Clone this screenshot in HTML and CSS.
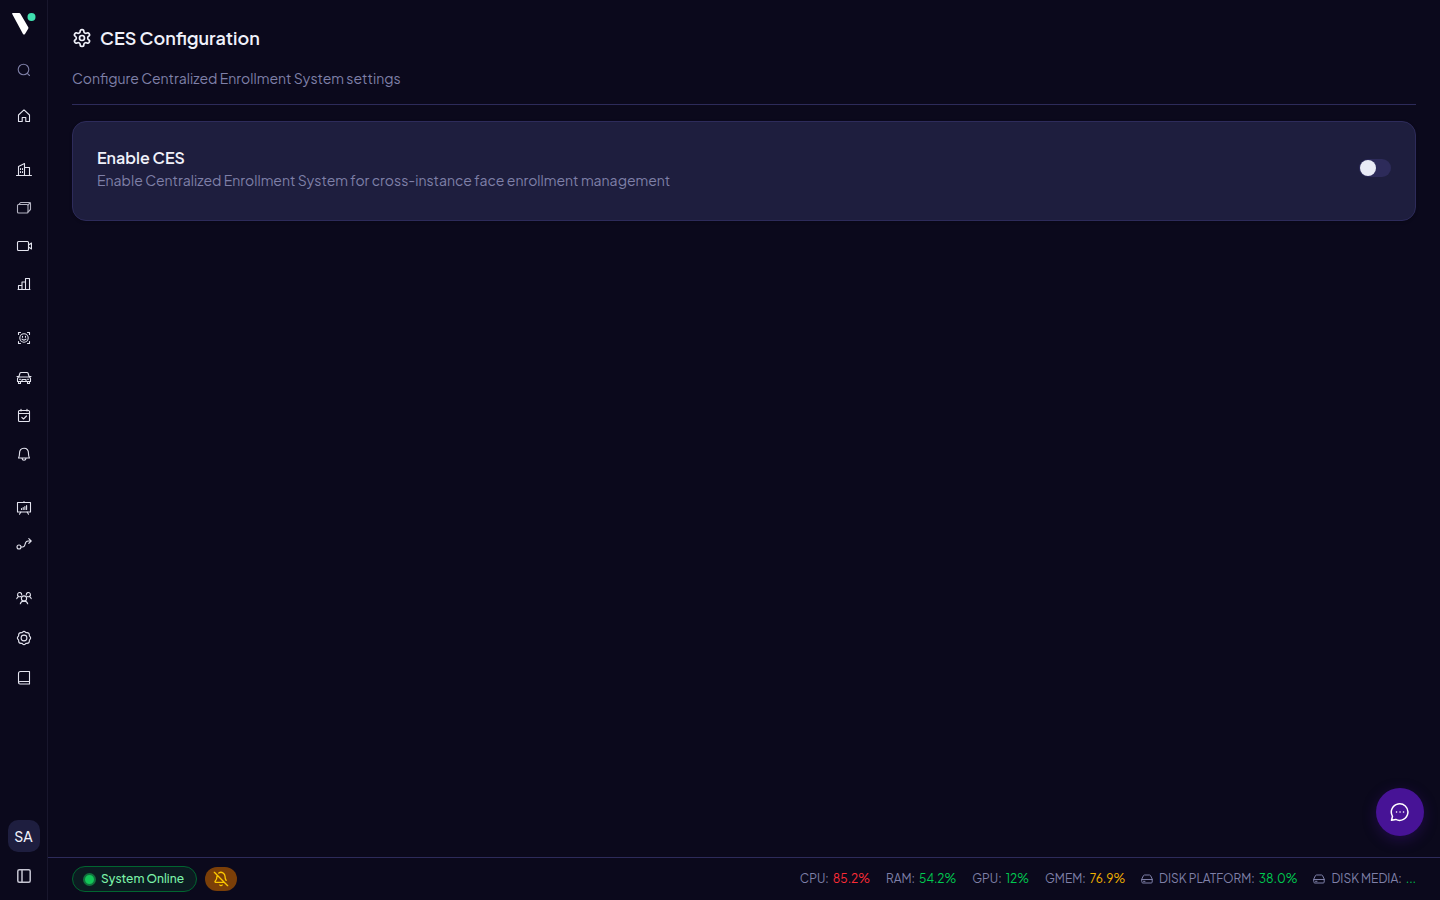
FILE: index.html
```html
<!DOCTYPE html>
<html lang="en">
<head>
  <meta charset="UTF-8" />
  <meta name="viewport" content="width=device-width, initial-scale=1.0"/>
  <title>CES Configuration</title>
  <link rel="stylesheet" href="styles.css">
</head>
<body>
  <aside class="sidebar">
    <a class="logo" href="#" aria-label="Home page">
      <svg width="24" height="24" viewBox="0 0 24 24">
        <path d="M.6 1H7.200Q8 1 8.400 1.700L16.300 15.300Q16.600 16 16.200 16.700L13 22Q12 23.200 11 22L.2 2Q0 1.200 .6 1Z" fill="#fff"/>
        <circle cx="19.500" cy="5" r="4" fill="#3fe0b0"/>
      </svg>
    </a>
    <button class="nav-item search" aria-label="Search">
      <svg class="icon" viewBox="0 0 16 16"><circle cx="7.500" cy="7.500" r="5.300"/><path d="M11.300 11.300L13.500 13.500"/></svg>
    </button>

    <nav class="nav">
      <div class="nav-group">
        <a class="nav-item" href="#" aria-label="Dashboard">
          <svg class="icon" viewBox="0 0 16 16"><path d="M2.500 7L8 1.800L13.500 7V13.500H9.800V9.500H6.200V13.500H2.500Z"/></svg>
        </a>
      </div>
      <div class="nav-group">
        <a class="nav-item tall" href="#" aria-label="Sites">
          <svg class="icon" viewBox="0 0 16 16"><path d="M.5 13.500H15.500M2.500 13.500V4.500L8.500 1.500V13.500M8.500 5.500H13.500V13.500"/><path d="M4.500 6.500V11M6.500 6.500V11" stroke-dasharray="1 2"/></svg>
        </a>
        <a class="nav-item" href="#" aria-label="Zones">
          <svg class="icon soft" viewBox="0 0 16 16"><rect x="1.500" y="4.500" width="10.500" height="8.500" rx="1"/><path d="M3 4.500L4 3Q4.300 2.500 5 2.500H13.500Q14.500 2.500 14.500 3.500V9.500L12 12M12 5L14.300 2.700"/></svg>
        </a>
        <a class="nav-item tall" href="#" aria-label="Cameras">
          <svg class="icon" viewBox="0 0 16 16"><rect x="1.500" y="3.500" width="11" height="9" rx="1"/><path d="M12.500 7L15.500 5V11L12.500 9"/></svg>
        </a>
        <a class="nav-item" href="#" aria-label="Analytics">
          <svg class="icon" viewBox="0 0 16 16"><path d="M2 13.500H14M2.500 13.500V9.500H6V13.500M6 10V6H9.500V13.500M9.500 6.500V2.500H13.500V13.500"/></svg>
        </a>
      </div>
      <div class="nav-group">
        <a class="nav-item tall" href="#" aria-label="Faces">
          <svg class="icon" viewBox="0 0 16 16"><path d="M2.500 4.500V2.500H4.500M11.500 2.500H13.500V4.500M13.500 11.500V13.500H11.500M4.500 13.500H2.500V11.500"/><circle cx="8" cy="8" r="4.200"/><path d="M6.500 6.300V7.300M9.500 6.300V7.300M6 9.200Q8 11 10 9.200"/></svg>
        </a>
        <a class="nav-item tall" href="#" aria-label="Vehicles">
          <svg class="icon" viewBox="0 0 16 16"><path d="M2.800 7L4 3Q4.300 2.500 5 2.500H11Q11.700 2.500 12 3L13.200 7M1 6.500H2.500M13.500 6.500H15M1.500 11.500V9Q1.500 7 3.500 7H12.500Q14.500 7 14.500 9V11.500ZM2.500 11.500V13.500H4.500V11.500M11.500 11.500V13.500H13.500V11.500M3.500 9.200H4.500M11.500 9.200H12.500M6 11.300V9.500H10V11.300"/></svg>
        </a>
        <a class="nav-item" href="#" aria-label="Attendance">
          <svg class="icon" viewBox="0 0 16 16"><rect x="2.500" y="2.500" width="11" height="11" rx="1"/><path d="M2.500 5.500H13.500M5 1.300V3M11 1.300V3M5.800 9.300L7.500 11L10.500 8"/></svg>
        </a>
        <a class="nav-item tall" href="#" aria-label="Alerts">
          <svg class="icon" viewBox="0 0 16 16"><path d="M2.500 12Q3.500 10.500 3.500 7.500Q3.500 2.200 8 2.200Q12.500 2.200 12.500 7.500Q12.500 10.500 13.500 12ZM6 12.300Q6.300 14.200 8 14.200Q9.700 14.200 10 12.300"/></svg>
        </a>
      </div>
      <div class="nav-group">
        <a class="nav-item" href="#" aria-label="Reports">
          <svg class="icon" viewBox="0 0 16 16"><rect x="1.500" y="2.500" width="13" height="9.500"/><path d="M8 1.500V2.500M4.800 12L3.500 14.200M11.200 12L12.500 14.200M5.500 9.500V8.500M7.200 9.500V7.500M8.900 9.500V6.500M10.600 9.500V5.500"/></svg>
        </a>
        <a class="nav-item" href="#" aria-label="Workflows">
          <svg class="icon" viewBox="0 0 16 16"><circle cx="3" cy="11" r="2"/><path d="M5 11H6.500Q8.500 11 9 8.500Q9.700 5 12 5H15M12.800 2.700L15.200 5L12.800 7.300"/></svg>
        </a>
      </div>
      <div class="nav-group">
        <a class="nav-item tall" href="#" aria-label="Users">
          <svg class="icon" viewBox="0 0 16 16"><circle cx="8" cy="8.500" r="2.600"/><path d="M4.300 13.800Q5 11.100 8 11.100Q11 11.100 11.700 13.800M5.700 5A2.100 2.100 0 1 0 2.600 6.500Q1.200 7 .8 8.700M2.600 6.500Q3.800 7 5 6.600M10.300 5A2.100 2.100 0 1 1 13.400 6.500Q14.800 7 15.200 8.700M13.400 6.500Q12.200 7 11 6.600"/></svg>
        </a>
        <a class="nav-item tall" href="#" aria-label="Settings">
          <svg class="icon" viewBox="0 0 16 16"><circle cx="8" cy="8" r="2.900"/><path d="M6.500 2.200Q8 .5 9.500 2.200L10.200 2.700L11 2.600Q13.300 2.700 13.400 5L13.300 5.800L13.800 6.500Q15.500 8 13.800 9.500L13.300 10.200L13.400 11Q13.300 13.300 11 13.400L10.200 13.300L9.500 13.800Q8 15.500 6.500 13.800L5.800 13.300L5 13.400Q2.700 13.300 2.600 11L2.700 10.200L2.200 9.500Q.5 8 2.200 6.500L2.700 5.800L2.600 5Q2.700 2.700 5 2.600L5.800 2.700Z"/></svg>
        </a>
        <a class="nav-item tall" href="#" aria-label="Documentation">
          <svg class="icon" viewBox="0 0 16 16"><path d="M2.500 12.500V3.500Q2.500 1.500 4.500 1.500H13.500V14H4Q2.500 14 2.500 12.500Q2.500 11.500 4 11.500H13.500"/></svg>
        </a>
      </div>
    </nav>

    <button class="avatar">SA</button>
    <button class="nav-item" aria-label="Expand sidebar">
      <svg class="icon panel" viewBox="0 0 16 16"><rect x="1.800" y="1.800" width="12.400" height="12.400" rx="1.500"/><path d="M6 2V14"/></svg>
    </button>
  </aside>

  <div class="page">
    <main class="content">
      <header class="page-header">
        <h1>
          <svg width="20" height="20" viewBox="0 0 24 24"><path d="M12.220 2h-.440a2 2 0 0 0-2 2v.180a2 2 0 0 1-1 1.730l-.430.250a2 2 0 0 1-2 0l-.150-.080a2 2 0 0 0-2.730.730l-.220.380a2 2 0 0 0 .730 2.730l.150.100a2 2 0 0 1 1 1.720v.510a2 2 0 0 1-1 1.740l-.150.090a2 2 0 0 0-.730 2.730l.220.380a2 2 0 0 0 2.730.730l.150-.080a2 2 0 0 1 2 0l.430.250a2 2 0 0 1 1 1.730V20a2 2 0 0 0 2 2h.440a2 2 0 0 0 2-2v-.180a2 2 0 0 1 1-1.730l.430-.250a2 2 0 0 1 2 0l.150.080a2 2 0 0 0 2.730-.730l.220-.390a2 2 0 0 0-.730-2.730l-.150-.080a2 2 0 0 1-1-1.740v-.500a2 2 0 0 1 1-1.740l.150-.090a2 2 0 0 0 .730-2.730l-.220-.380a2 2 0 0 0-2.730-.730l-.150.080a2 2 0 0 1-2 0l-.430-.250a2 2 0 0 1-1-1.730V4a2 2 0 0 0-2-2z"/><circle cx="12" cy="12" r="3"/></svg>
          CES Configuration
        </h1>
        <p>Configure Centralized Enrollment System settings</p>
      </header>

      <section class="card">
        <div>
          <label class="card-title" for="enableCes">Enable CES</label>
          <p class="card-text" id="cesText">Enable Centralized Enrollment System for cross-instance face enrollment management</p>
        </div>
        <input class="switch" type="checkbox" role="switch" id="enableCes" aria-describedby="cesText">
      </section>
    </main>

    <footer class="statusbar">
      <div class="status-left">
        <span class="online"><span class="dot"></span>System Online</span>
        <button class="mute" aria-label="Notifications off">
          <svg width="16" height="16" viewBox="0 0 24 24"><path d="M10.268 21a2 2 0 0 0 3.464 0M17 17H4a1 1 0 0 1-.740-1.673C4.590 13.956 6 12.499 6 8a6 6 0 0 1 .258-1.742M2 2l20 20M8.668 3.010A6 6 0 0 1 18 8c0 2.687.770 4.653 1.707 6.050"/></svg>
        </button>
      </div>
      <div class="metrics">
        <span class="metric">CPU: <b class="red">85.2%</b></span>
        <span class="metric">RAM: <b class="green">54.2%</b></span>
        <span class="metric">GPU: <b class="green">12%</b></span>
        <span class="metric">GMEM: <b class="yellow">76.9%</b></span>
        <span class="metric">
          <svg class="disk" viewBox="0 0 12 12"><path d="M.8 6L2.500 2.500Q2.800 2 3.500 2H8.500Q9.200 2 9.500 2.500L11.200 6V9Q11.200 10 10.200 10H1.800Q.8 10 .8 9ZM.8 6.500H11.200M2.500 8.300H4"/></svg>
          DISK PLATFORM: <b class="green">38.0%</b>
        </span>
        <span class="metric">
          <svg class="disk" viewBox="0 0 12 12"><path d="M.8 6L2.500 2.500Q2.800 2 3.500 2H8.500Q9.200 2 9.500 2.500L11.200 6V9Q11.200 10 10.200 10H1.800Q.8 10 .8 9ZM.8 6.500H11.200M2.500 8.300H4"/></svg>
          DISK MEDIA: <b class="green">...</b>
        </span>
      </div>
    </footer>
  </div>

  <button class="chat" aria-label="Open chat">
    <svg width="20" height="20" viewBox="0 0 20 20"><path d="M1.500 18.300L2.500 14.300A8.300 8.300 0 1 1 5.800 17.400Z"/><path d="M6.500 10H6.600M10 10H10.100M13.500 10H13.600"/></svg>
  </button>
</body>
</html>
```

FILE: styles.css
```css
* {
  box-sizing: border-box;
}

body {
  margin: 0;
  display: flex;
  min-height: 100vh;
  background-color: #0b091c;
  color: #f0f1fa;
  font-family: 'Plus Jakarta Sans', Inter, sans-serif;
  font-size: 14px;
  line-height: 20px;
}

button {
  font-family: inherit;
  border: none;
  cursor: pointer;
}

svg {
  flex: none;
  fill: none;
  stroke-linecap: round;
  stroke-linejoin: round;
}

h1, p {
  margin: 0;
}

/* Sidebar */
.sidebar {
  width: 48px;
  flex: none;
  display: flex;
  flex-direction: column;
  align-items: center;
  padding: 12px 0 6px;
  border-right: 1px solid #19172d;
}

.logo {
  height: 40px;
}

.logo svg {
  display: block;
}

.nav {
  flex: 1;
  display: flex;
  flex-direction: column;
  gap: 16px;
  margin-top: 10px;
}

.nav-item {
  display: flex;
  align-items: center;
  justify-content: center;
  width: 32px;
  height: 36px;
  padding: 0;
  background: none;
  color: #e4e4ef;
}

.nav-item.tall {
  height: 40px;
}

.nav-item.search {
  color: #7c7da4;
}

.icon {
  width: 16px;
  height: 16px;
  stroke: currentColor;
  stroke-width: 1.1;
}

.icon.soft {
  color: #b4b3c2;
}

.icon.panel {
  color: #c6c5d2;
  stroke-width: 1.5;
}

.avatar {
  width: 32px;
  height: 32px;
  margin-bottom: 6px;
  padding: 0;
  border-radius: 10px;
  background-color: #1e1e3f;
  color: #f0f1fa;
  font-size: 14px;
  font-weight: 500;
}

/* Main column */
.page {
  flex: 1;
  min-width: 0;
  display: flex;
  flex-direction: column;
}

.content {
  flex: 1;
  padding: 24px;
}

.page-header {
  padding-bottom: 15px;
  margin-bottom: 16px;
  border-bottom: 1px solid #2d2b5a;
}

.page-header h1 {
  display: flex;
  align-items: center;
  gap: 8px;
  margin-bottom: 16px;
  font-size: 18px;
  line-height: 28px;
  font-weight: 600;
}

.page-header h1 svg {
  stroke: currentColor;
  stroke-width: 2;
}

.page-header p {
  line-height: 21px;
  color: #7f80a8;
}

.card {
  display: flex;
  align-items: center;
  justify-content: space-between;
  padding: 24px 24px 30px;
  border: 1px solid #2d2b5a;
  border-radius: 14px;
  background-color: #1e1e3e;
  box-shadow: 0 1px 3px rgba(0, 0, 0, 0.2);
}

.card-title {
  display: block;
  font-size: 16px;
  line-height: 24px;
  font-weight: 600;
}

.card-text {
  color: #7f80a8;
}

.switch {
  appearance: none;
  flex: none;
  width: 32px;
  height: 18px;
  margin: 0;
  padding: 1px;
  border-radius: 9px;
  background-color: #2d2b5a;
  cursor: pointer;
}

.switch::before {
  content: "";
  display: block;
  width: 16px;
  height: 16px;
  border-radius: 50%;
  background-color: #e9ebf6;
}

.switch:checked::before {
  margin-left: 14px;
}

/* Status bar */
.statusbar {
  display: flex;
  align-items: center;
  justify-content: space-between;
  height: 43px;
  padding: 0 24px;
  border-top: 1px solid #2d2b5a;
  font-size: 12px;
  line-height: 16px;
}

.status-left {
  display: flex;
  align-items: center;
  gap: 8px;
}

.online {
  display: flex;
  align-items: center;
  gap: 5px;
  padding: 4px 12px 4px 10px;
  border: 1px solid #016630;
  border-radius: 13px;
  background-color: #0c1b21;
  color: #7bf1a8;
  font-weight: 500;
}

.dot {
  width: 13px;
  height: 13px;
  border: 2px solid #12713d;
  border-radius: 50%;
  background-color: #13c658;
}

.mute {
  display: flex;
  align-items: center;
  justify-content: center;
  width: 32px;
  height: 24px;
  padding: 0;
  border-radius: 12px;
  background-color: #7b3f08;
}

.mute svg {
  stroke: #fcc800;
  stroke-width: 2;
}

.metrics {
  display: flex;
  gap: 16px;
  color: #7f80a8;
}

.metric {
  display: flex;
  align-items: center;
  gap: 4px;
}

.metric b {
  font-weight: 400;
}

.disk {
  width: 12px;
  height: 12px;
  margin-right: 2px;
  stroke: currentColor;
}

.red {
  color: #fb2c36;
}

.green {
  color: #00c950;
}

.yellow {
  color: #f0b100;
}

/* Floating chat button */
.chat {
  position: fixed;
  right: 16px;
  bottom: 64px;
  display: flex;
  align-items: center;
  justify-content: center;
  width: 48px;
  height: 48px;
  padding: 0;
  border-radius: 50%;
  background-color: #471396;
  box-shadow: 0 4px 14px rgba(71, 19, 150, 0.35);
}

.chat svg {
  stroke: #fff;
  stroke-width: 1.5;
}
```
